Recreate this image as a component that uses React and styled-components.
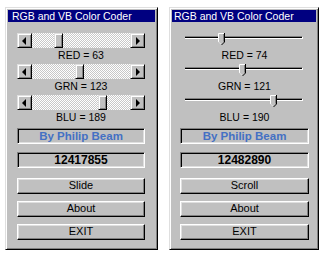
import React from "react";
import styled, { createGlobalStyle } from "styled-components";

const GlobalStyle = createGlobalStyle`
  html, body { margin: 0; padding: 0; background: #ffffff; }
  body { font-family: "Liberation Sans", Arial, sans-serif; }
`;

const Page = styled.div`
  display: flex;
  align-items: flex-start;
  gap: 11px;
  padding: 7px 0 0 5px;
`;

const Window = styled.div`
  box-sizing: border-box;
  width: ${(p) => p.$w}px;
  height: 243px;
  background: #c0c0c0;
  border: 1px solid;
  border-color: #dfdfdf #000000 #000000 #dfdfdf;
  box-shadow: inset 1px 1px #ffffff, inset -1px -1px #808080;
  padding: 2px;
  display: flex;
  flex-direction: column;
`;

const TitleBar = styled.div`
  height: 12px;
  background: #000080;
  color: #ffffff;
  font-size: 10.5px;
  line-height: 12px;
  padding-left: ${(p) => p.$pl}px;
  white-space: nowrap;
  overflow: hidden;
`;

const Content = styled.div`
  display: flex;
  flex-direction: column;
  width: ${(p) => p.$cw}px;
  margin: 11px 0 0 ${(p) => p.$ml}px;
`;

const Label = styled.div`
  height: 16px;
  font-size: 10.5px;
  line-height: 14px;
  text-align: center;
  color: #000000;
`;

/* Scroll bar (left window) */
const ScrollBar = styled.div`
  display: flex;
  height: 15px;
`;

const ArrowButton = styled.div`
  box-sizing: border-box;
  width: 15px;
  height: 15px;
  background: #c0c0c0;
  border: 1px solid;
  border-color: #dfdfdf #000000 #000000 #dfdfdf;
  box-shadow: inset 1px 1px #ffffff, inset -1px -1px #808080;
  display: flex;
  align-items: center;
  justify-content: center;
`;

const Arrow = styled.span`
  width: 0;
  height: 0;
  border-top: 4px solid transparent;
  border-bottom: 4px solid transparent;
  ${(p) =>
    p.$dir === "left"
      ? "border-right: 4px solid #000; margin-right: 1px;"
      : "border-left: 4px solid #000; margin-left: 1px;"}
`;

const Track = styled.div`
  position: relative;
  flex: 1;
  background: repeating-conic-gradient(#ffffff 0 25%, #c8c8c8 0 50%) 0 0 / 2px 2px;
`;

const Thumb = styled.div`
  position: absolute;
  top: 0;
  box-sizing: border-box;
  width: 9px;
  height: 15px;
  background: #c0c0c0;
  border: 1px solid;
  border-color: #dfdfdf #000000 #000000 #dfdfdf;
  box-shadow: inset 1px 1px #ffffff, inset -1px -1px #808080;
`;

/* Track bar (right window) */
const TrackBar = styled.div`
  position: relative;
  height: 15px;
`;

const Groove = styled.div`
  box-sizing: border-box;
  height: 3px;
  margin: 3px 6px 0 5px;
  background: #000000;
  border-top: 1px solid #808080;
  border-bottom: 1px solid #ffffff;
  border-right: 1px solid #ffffff;
`;

const Knob = styled.svg`
  position: absolute;
  top: 0;
  display: block;
`;

const SunkenBox = styled.div`
  box-sizing: border-box;
  height: 16px;
  border: 1px solid;
  border-color: #808080 #ffffff #ffffff #808080;
  box-shadow: inset 1px 1px #000000, inset -1px -1px #dfdfdf;
  text-align: center;
  font-weight: bold;
  font-size: ${(p) => p.$size}px;
  line-height: 14px;
  color: ${(p) => p.$color};
  margin-top: ${(p) => p.$mt}px;
`;

const Button = styled.div`
  box-sizing: border-box;
  height: 16px;
  border: 1px solid;
  border-color: #ffffff #000000 #000000 #ffffff;
  box-shadow: inset -1px -1px #808080, inset 1px 1px #dfdfdf;
  text-align: center;
  font-size: 11px;
  line-height: 13px;
  color: #000000;
  margin-top: ${(p) => p.$mt}px;
`;

function Scroll({ value }) {
  const left = Math.round((value / 255) * (98 - 9));
  return (
    <ScrollBar>
      <ArrowButton>
        <Arrow $dir="left" />
      </ArrowButton>
      <Track>
        <Thumb style={{ left }} />
      </Track>
      <ArrowButton>
        <Arrow $dir="right" />
      </ArrowButton>
    </ScrollBar>
  );
}

function Slider({ value }) {
  const center = 8 + Math.round((value / 255) * 114);
  return (
    <TrackBar>
      <Groove />
      <Knob width="7" height="12" viewBox="0 0 7 12" style={{ left: center - 3 }}>
        <path d="M0 0H7V9L3.5 12L0 9Z" fill="#c0c0c0" />
        <path d="M0.5 9V0.5H6" stroke="#ffffff" fill="none" />
        <path d="M0.5 9L3.5 11.5" stroke="#dfdfdf" fill="none" />
        <path d="M6.5 0V9L3.5 12" stroke="#000000" fill="none" />
        <path d="M5.5 1V8.6" stroke="#808080" fill="none" />
      </Knob>
    </TrackBar>
  );
}

function Coder({ width, titlePad, contentWidth, contentLeft, values, number, mode, Control }) {
  const names = ["RED", "GRN", "BLU"];
  return (
    <Window $w={width}>
      <TitleBar $pl={titlePad}>RGB and VB Color Coder</TitleBar>
      <Content $cw={contentWidth} $ml={contentLeft}>
        {values.map((v, i) => (
          <React.Fragment key={names[i]}>
            <Control value={v} />
            <Label>
              {names[i]} = {v}
            </Label>
          </React.Fragment>
        ))}
        <SunkenBox $size={11.5} $color="#4470c4" $mt={2}>
          By Philip Beam
        </SunkenBox>
        <SunkenBox $size={12} $color="#000000" $mt={8}>
          {number}
        </SunkenBox>
        <Button $mt={10}>{mode}</Button>
        <Button $mt={7}>About</Button>
        <Button $mt={7}>EXIT</Button>
      </Content>
    </Window>
  );
}

export default function App() {
  return (
    <>
      <GlobalStyle />
      <Page>
        <Coder
          width={153}
          titlePad={4}
          contentWidth={128}
          contentLeft={9}
          values={[63, 123, 189]}
          number="12417855"
          mode="Slide"
          Control={Scroll}
        />
        <Coder
          width={150}
          titlePad={2}
          contentWidth={129}
          contentLeft={8}
          values={[74, 121, 190]}
          number="12482890"
          mode="Scroll"
          Control={Slider}
        />
      </Page>
    </>
  );
}
